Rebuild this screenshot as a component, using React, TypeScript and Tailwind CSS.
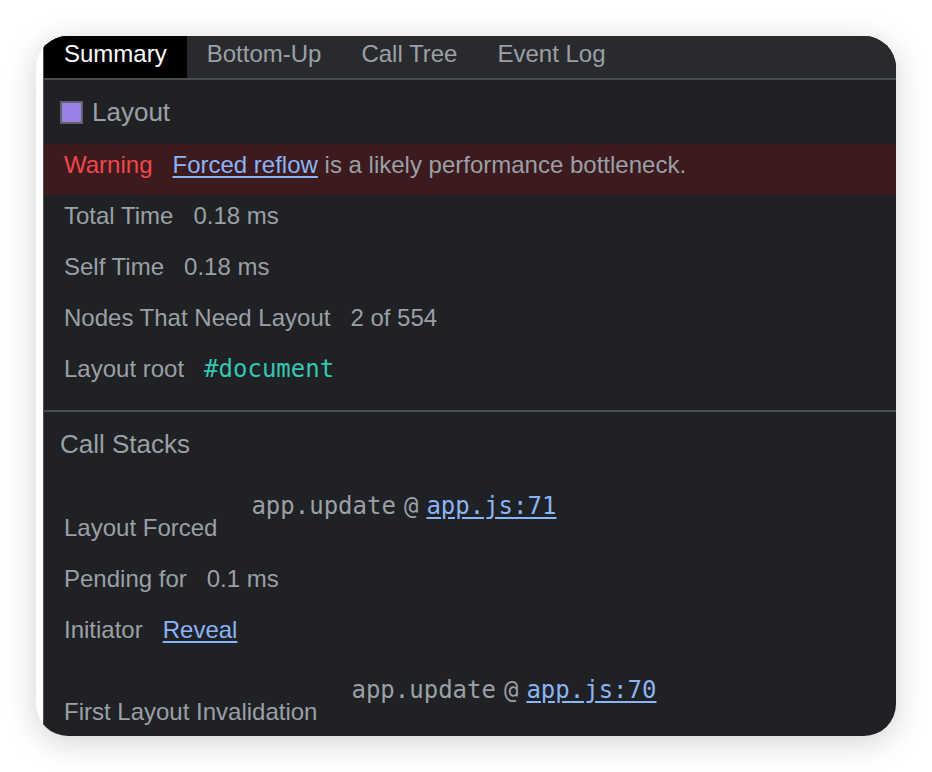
import React from 'react';

const sans = "font-['Liberation_Sans',Arial,sans-serif]";
const mono = "font-['DejaVu_Sans_Mono','Liberation_Mono',monospace]";

const tabs = ['Summary', 'Bottom-Up', 'Call Tree', 'Event Log'];

const Row: React.FC<{ label: string; children: React.ReactNode }> = ({ label, children }) => (
  <div className="h-[51px] shrink-0 flex items-baseline gap-[20px] pl-[20px] pt-[7px] leading-[28px]">
    <span className="text-[#9aa0a6]">{label}</span>
    {children}
  </div>
);

const StackRow: React.FC<{ label: string; fn: string; file: string }> = ({ label, fn, file }) => (
  <div className="h-[82px] flex items-start pl-[20px] leading-[28px] shrink-0">
    <span className="text-[#9aa0a6] pt-[38px]">{label}</span>
    <div className={`${mono} ml-[34px] pt-[16px] flex items-baseline text-[24px]`}>
      <span className="text-[#9aa0a6]">{fn}</span>
      <span className="ml-[8px] text-[#9aa0a6]">@</span>
      <a className="ml-[8px] text-[#8ab4f8] underline underline-offset-[3px] cursor-pointer">{file}</a>
    </div>
  </div>
);

export default function App() {
  return (
    <div className={`min-h-screen bg-white pt-[36px] pl-[36px] ${sans}`}>
      <div className="w-[860px] h-[700px] rounded-[32px] overflow-hidden bg-white pl-[7px] flex shadow-[0_6px_32px_rgba(0,0,0,0.18)]">
        <div className="flex-1 flex flex-col bg-[#202124] border-l border-[#4a4c50] text-[24px] overflow-hidden">
          {/* Tab bar */}
          <div className="h-[44px] shrink-0 flex bg-[#292a2d] border-b-2 border-[#494c50]">
            {tabs.map((t, i) => (
              <div
                key={t}
                className={`px-[20px] pt-[4px] leading-[28px] ${i === 0 ? 'bg-black text-white' : 'text-[#9aa0a6]'}`}
              >
                {t}
              </div>
            ))}
          </div>

          {/* Title */}
          <div className="h-[64px] shrink-0 flex items-center pl-[16px] gap-[9px]">
            <div className="w-[23px] h-[23px] bg-[#9b80e6] border-2 border-[#5f6368]" />
            <span className="text-[26px] text-[#9aa0a6]">Layout</span>
          </div>

          {/* Warning */}
          <div className="h-[51px] shrink-0 flex items-baseline gap-[20px] pl-[20px] pt-[7px] leading-[28px] bg-[#3c1a1d]">
            <span className="text-[#f0474a]">Warning</span>
            <span className="text-[#9aa0a6]">
              <a className="text-[#8ab4f8] underline underline-offset-[3px] cursor-pointer">Forced reflow</a> is a likely
              performance bottleneck.
            </span>
          </div>

          <Row label="Total Time">
            <span className="text-[#9aa0a6]">0.18 ms</span>
          </Row>
          <Row label="Self Time">
            <span className="text-[#9aa0a6]">0.18 ms</span>
          </Row>
          <Row label="Nodes That Need Layout">
            <span className="text-[#9aa0a6]">2 of 554</span>
          </Row>
          <Row label="Layout root">
            <span className={`${mono} text-[#35c6b3]`}>#document</span>
          </Row>

          <div className="h-[13px] shrink-0 border-b-2 border-[#494c50]" />

          {/* Call stacks */}
          <div className="h-[64px] shrink-0 flex items-center pl-[16px]">
            <span className="text-[26px] text-[#9aa0a6]">Call Stacks</span>
          </div>

          <StackRow label="Layout Forced" fn="app.update" file="app.js:71" />
          <Row label="Pending for">
            <span className="text-[#9aa0a6]">0.1 ms</span>
          </Row>
          <Row label="Initiator">
            <a className="text-[#8ab4f8] underline underline-offset-[3px] cursor-pointer">Reveal</a>
          </Row>
          <StackRow label="First Layout Invalidation" fn="app.update" file="app.js:70" />
        </div>
      </div>
    </div>
  );
}
